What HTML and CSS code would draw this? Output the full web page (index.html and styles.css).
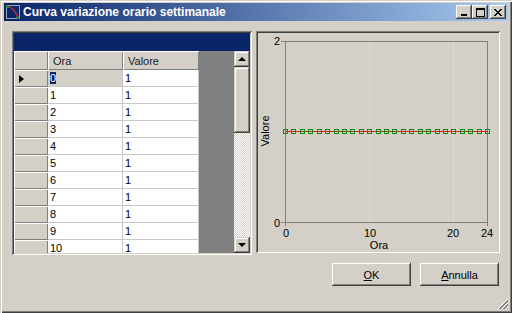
FILE: index.html
```html
<!DOCTYPE html>
<html lang="it">
  <head>
    <meta charset="UTF-8" />
    <title>Curva variazione orario settimanale</title>
    <link rel="stylesheet" href="styles.css">
  </head>
  <body>
    <div class="window">
      <div class="titlebar">
        <svg class="app-icon" width="16" height="16" viewBox="0 0 16 16">
          <rect x="1.5" y="1.5" width="13" height="13" fill="none" stroke="#9aa4b4" />
          <path d="M2 2 C 7 3, 11 8, 13 14" fill="none" stroke="#b03030" stroke-width="1.5" />
          <circle cx="2.5" cy="2.5" r="1.5" fill="#2a8a2a" />
          <circle cx="13" cy="13.5" r="1.5" fill="#2a8a2a" />
        </svg>
        <span class="title">Curva variazione orario settimanale</span>
        <div class="caption-buttons">
          <button class="cap-btn">
            <svg width="8" height="8" viewBox="0 0 8 8"><rect x="1" y="6" width="6" height="2" fill="#000" /></svg>
          </button>
          <button class="cap-btn">
            <svg width="9" height="9" viewBox="0 0 9 9"><rect x="0.5" y="0.5" width="8" height="8" fill="none" stroke="#000" /><rect x="0" y="0" width="9" height="2" fill="#000" /></svg>
          </button>
          <button class="cap-btn close">
            <svg width="8" height="7" viewBox="0 0 8 7"><path d="M0 0 L7 7 M1 0 L8 7 M7 0 L0 7 M8 0 L1 7" stroke="#000" stroke-width="1" /></svg>
          </button>
        </div>
      </div>

      <div class="content">
        <div class="panels">
          <div class="grid-panel">
            <div class="grid-caption"></div>
            <div class="grid-body">
              <div class="grid-table">
                <div class="grid-row grid-head">
                  <div class="row-head"></div>
                  <div class="col-head">Ora</div>
                  <div class="col-head">Valore</div>
                </div>
                <div class="grid-row current">
                  <div class="row-head"><span class="pointer"></span></div>
                  <div class="cell editing"><span class="sel">0</span></div>
                  <div class="cell">1</div>
                </div>
                <div class="grid-row"><div class="row-head"></div><div class="cell">1</div><div class="cell">1</div></div>
                <div class="grid-row"><div class="row-head"></div><div class="cell">2</div><div class="cell">1</div></div>
                <div class="grid-row"><div class="row-head"></div><div class="cell">3</div><div class="cell">1</div></div>
                <div class="grid-row"><div class="row-head"></div><div class="cell">4</div><div class="cell">1</div></div>
                <div class="grid-row"><div class="row-head"></div><div class="cell">5</div><div class="cell">1</div></div>
                <div class="grid-row"><div class="row-head"></div><div class="cell">6</div><div class="cell">1</div></div>
                <div class="grid-row"><div class="row-head"></div><div class="cell">7</div><div class="cell">1</div></div>
                <div class="grid-row"><div class="row-head"></div><div class="cell">8</div><div class="cell">1</div></div>
                <div class="grid-row"><div class="row-head"></div><div class="cell">9</div><div class="cell">1</div></div>
                <div class="grid-row"><div class="row-head"></div><div class="cell">10</div><div class="cell">1</div></div>
              </div>
              <div class="vscroll">
                <div class="scroll-btn"><span class="arrow up"></span></div>
                <div class="scroll-track">
                  <div class="scroll-thumb"></div>
                </div>
                <div class="scroll-btn"><span class="arrow down"></span></div>
              </div>
            </div>
          </div>

          <div class="chart-panel">
            <svg class="chart" width="240" height="218" viewBox="0 0 240 218">
              <line x1="111.5" y1="9" x2="111.5" y2="189" stroke="#dcd9d2" />
              <line x1="195.5" y1="9" x2="195.5" y2="189" stroke="#dcd9d2" />
              <rect x="27.5" y="8.5" width="202" height="181" fill="none" stroke="#808080" />
              <line x1="23" y1="8.5" x2="27" y2="8.5" stroke="#808080" />
              <line x1="23" y1="189.5" x2="27" y2="189.5" stroke="#808080" />
              <line x1="27.5" y1="190" x2="27.5" y2="193" stroke="#808080" />
              <line x1="229.5" y1="190" x2="229.5" y2="193" stroke="#808080" />

              <text class="tick" x="19" y="12" text-anchor="middle">2</text>
              <text class="tick" x="19" y="194" text-anchor="middle">0</text>
              <text class="tick" x="28" y="204" text-anchor="middle">0</text>
              <text class="tick" x="112" y="204" text-anchor="middle">10</text>
              <text class="tick" x="195" y="204" text-anchor="middle">20</text>
              <text class="tick" x="229" y="204" text-anchor="middle">24</text>
              <text class="tick" x="121" y="216" text-anchor="middle">Ora</text>
              <text class="tick" transform="translate(11 98) rotate(-90)" text-anchor="middle">Valore</text>

              <line x1="27" y1="98.5" x2="230" y2="98.5" stroke="#d02818" />
              <g class="points" fill="none" stroke="#108a10">
                <rect x="25.5" y="96.5" width="4" height="4" />
                <rect x="33.5" y="96.5" width="4" height="4" />
                <rect x="42.5" y="96.5" width="4" height="4" />
                <rect x="50.5" y="96.5" width="4" height="4" />
                <rect x="59.5" y="96.5" width="4" height="4" />
                <rect x="67.5" y="96.5" width="4" height="4" />
                <rect x="76.5" y="96.5" width="4" height="4" />
                <rect x="84.5" y="96.5" width="4" height="4" />
                <rect x="92.5" y="96.5" width="4" height="4" />
                <rect x="101.5" y="96.5" width="4" height="4" />
                <rect x="109.5" y="96.5" width="4" height="4" />
                <rect x="118.5" y="96.5" width="4" height="4" />
                <rect x="126.5" y="96.5" width="4" height="4" />
                <rect x="134.5" y="96.5" width="4" height="4" />
                <rect x="143.5" y="96.5" width="4" height="4" />
                <rect x="151.5" y="96.5" width="4" height="4" />
                <rect x="160.5" y="96.5" width="4" height="4" />
                <rect x="168.5" y="96.5" width="4" height="4" />
                <rect x="177.5" y="96.5" width="4" height="4" />
                <rect x="185.5" y="96.5" width="4" height="4" />
                <rect x="193.5" y="96.5" width="4" height="4" />
                <rect x="202.5" y="96.5" width="4" height="4" />
                <rect x="210.5" y="96.5" width="4" height="4" />
                <rect x="219.5" y="96.5" width="4" height="4" />
                <rect x="227.5" y="96.5" width="4" height="4" />
              </g>
            </svg>
          </div>
        </div>

        <div class="actions">
          <button class="btn"><u>O</u>K</button>
          <button class="btn"><u>A</u>nnulla</button>
        </div>
      </div>

      <svg class="grip" width="12" height="12" viewBox="0 0 12 12">
        <path d="M11 1 L1 11 M11 5 L5 11 M11 9 L9 11" stroke="#fff" />
        <path d="M11 2 L2 11 M11 3 L3 11 M11 6 L6 11 M11 7 L7 11 M11 10 L10 11" stroke="#808080" />
      </svg>
    </div>
  </body>
</html>
```

FILE: styles.css
```css
body {
  margin: 0;
  font-family: "Liberation Sans", Arial, sans-serif;
  font-size: 11px;
  color: #000;
  background: #d4d0c8;
}

.window {
  position: relative;
  width: 512px;
  height: 313px;
  box-sizing: border-box;
  padding: 3px 4px 4px 4px;
  background: #d4d0c8;
  box-shadow: inset 1px 1px #d4d0c8, inset 2px 2px #fff, inset -1px -1px #404040, inset -2px -2px #808080;
  display: flex;
  flex-direction: column;
}

/* title bar */

.titlebar {
  height: 18px;
  display: flex;
  align-items: center;
  background: linear-gradient(to right, #0a246a, #a6caf0);
  color: #fff;
}

.app-icon {
  margin: 0 2px 0 1px;
}

.title {
  font-weight: bold;
  font-size: 12px;
  flex: 1;
}

.caption-buttons {
  display: flex;
  margin-right: 2px;
}

.cap-btn {
  width: 16px;
  height: 14px;
  padding: 0;
  border: none;
  background: #d4d0c8;
  box-shadow: inset -1px -1px #404040, inset 1px 1px #fff, inset -2px -2px #808080;
  display: flex;
  align-items: center;
  justify-content: center;
}

.cap-btn.close {
  margin-left: 2px;
}

/* content */

.content {
  flex: 1;
  padding: 10px 8px 0 8px;
  display: flex;
  flex-direction: column;
}

.panels {
  display: flex;
  gap: 4px;
  align-items: flex-start;
}

.grid-panel {
  width: 240px;
  height: 224px;
  box-sizing: border-box;
  padding: 2px;
  box-shadow: inset 1px 1px #808080, inset -1px -1px #fff, inset 2px 2px #404040, inset -2px -2px #d4d0c8;
  display: flex;
  flex-direction: column;
}

.grid-caption {
  height: 18px;
  background: #0a246a;
}

.grid-body {
  flex: 1;
  display: flex;
  overflow: hidden;
}

.grid-table {
  width: 220px;
  background: #808080;
  overflow: hidden;
}

.grid-row {
  display: grid;
  grid-template-columns: 34px 75px 76px;
  width: 185px;
  height: 17px;
}

.grid-head {
  height: 19px;
}

.row-head {
  background: #d4d0c8;
  box-shadow: inset 1px 1px #fff, inset -1px -1px #808080;
  display: flex;
  align-items: center;
  padding-left: 5px;
}

.col-head {
  background: #d4d0c8;
  box-shadow: inset 1px 1px #fff, inset -1px -1px #808080;
  padding: 4px 0 0 5px;
  color: #202020;
}

.cell {
  background: #fff;
  border-right: 1px solid #c8c8c8;
  border-bottom: 1px solid #c8c8c8;
  padding: 2px 0 0 2px;
  line-height: 13px;
}

.cell.editing {
  background: #d4d0c8;
}

.sel {
  background: #0a246a;
  color: #fff;
}

.pointer {
  width: 0;
  height: 0;
  border-top: 4px solid transparent;
  border-bottom: 4px solid transparent;
  border-left: 5px solid #000;
}

/* scrollbar */

.vscroll {
  width: 16px;
  display: flex;
  flex-direction: column;
}

.scroll-btn {
  height: 16px;
  background: #d4d0c8;
  box-shadow: inset -1px -1px #404040, inset 1px 1px #d4d0c8, inset -2px -2px #808080, inset 2px 2px #fff;
  display: flex;
  align-items: center;
  justify-content: center;
}

.arrow {
  width: 0;
  height: 0;
  border-left: 4px solid transparent;
  border-right: 4px solid transparent;
}

.arrow.up {
  border-bottom: 4px solid #000;
}

.arrow.down {
  border-top: 4px solid #000;
}

.scroll-track {
  flex: 1;
  background: repeating-conic-gradient(#fff 0 25%, #d4d0c8 0 50%) 0 0 / 2px 2px;
}

.scroll-thumb {
  height: 66px;
  background: #d4d0c8;
  box-shadow: inset -1px -1px #404040, inset 1px 1px #d4d0c8, inset -2px -2px #808080, inset 2px 2px #fff;
}

/* chart */

.chart-panel {
  width: 244px;
  height: 222px;
  box-sizing: border-box;
  padding: 2px;
  box-shadow: inset 1px 1px #808080, inset -1px -1px #fff, inset 2px 2px #404040, inset -2px -2px #d4d0c8;
}

.chart {
  display: block;
}

.tick {
  font-family: "Liberation Sans", Arial, sans-serif;
  font-size: 11px;
  fill: #000;
}

/* buttons */

.actions {
  display: flex;
  justify-content: flex-end;
  gap: 9px;
  margin-top: 8px;
  padding-right: 1px;
}

.btn {
  width: 79px;
  height: 23px;
  padding: 0;
  border: none;
  background: #d4d0c8;
  font-family: inherit;
  font-size: 11px;
  color: #000;
  box-shadow: inset -1px -1px #404040, inset 1px 1px #fff, inset -2px -2px #808080;
}

.grip {
  position: absolute;
  right: 3px;
  bottom: 3px;
}
```
